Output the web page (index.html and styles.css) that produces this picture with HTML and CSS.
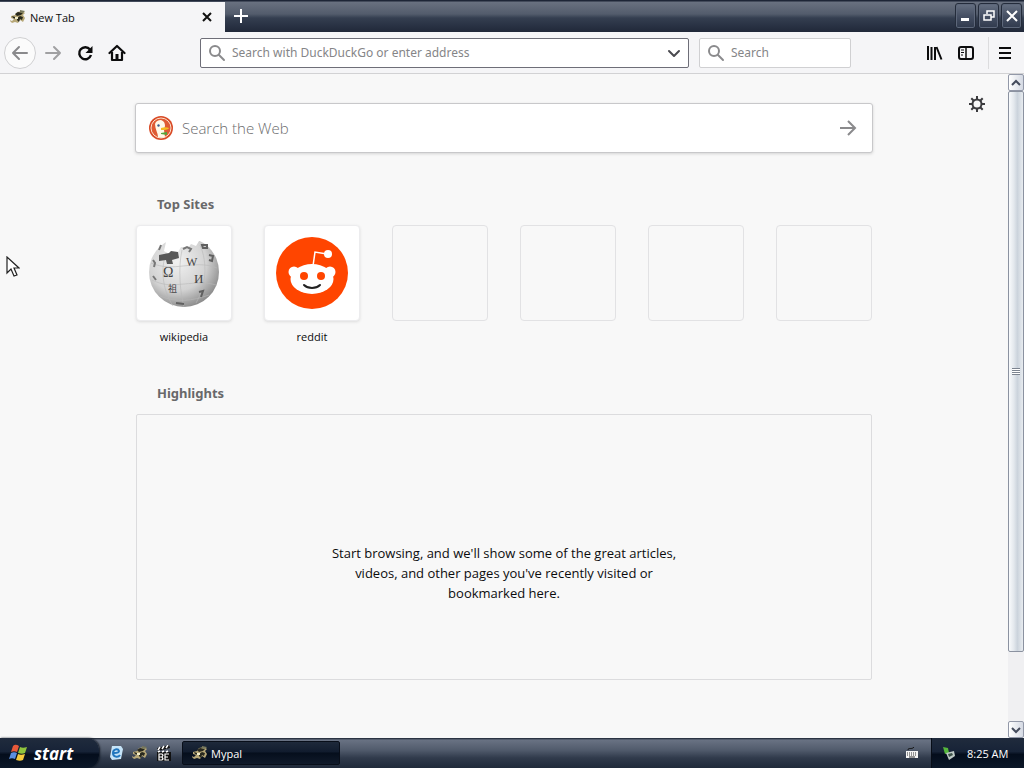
FILE: index.html
```html
<!DOCTYPE html>
<html lang="en">
<head>
    <meta charset="UTF-8">
    <meta name="viewport" content="width=device-width, initial-scale=1.0">
    <title>New Tab</title>
    <link rel="stylesheet" href="styles.css">
</head>
<body>
    <svg class="defs" width="0" height="0" aria-hidden="true">
        <symbol id="icon-mypal" viewBox="0 0 16 16">
            <path d="M1 7l4-1 2-3 5-1 3 2-2 2 2 3-2 4-3-2-2 3-3-1-3 1-3-3 3 1 2-2-3-1z" fill="#b7a878"/>
            <path d="M5 5l3-2 5 1-2 2-4 1zM2 7l3 1 1 2-3-1zM7 9l3-2 3 1-1 3-2-1-1 3-2-2z" fill="#28291f"/>
            <path d="M10 1l5 1-2 2-3-1z" fill="#77785d"/>
            <path d="M5 8h3v2H5z" fill="#f3edcc"/>
        </symbol>
        <symbol id="icon-search" viewBox="0 0 18 18">
            <circle cx="7" cy="7" r="5" fill="none" stroke="currentColor" stroke-width="2"/>
            <path d="M11 11l5 5" stroke="currentColor" stroke-width="2" stroke-linecap="round"/>
        </symbol>
    </svg>

    <div class="window">
        <header class="titlebar">
            <div class="tab">
                <svg class="icon" viewBox="0 0 16 16"><use href="#icon-mypal"/></svg>
                <span class="tab-title">New Tab</span>
                <button class="tab-close" aria-label="Close tab">
                    <svg width="10" height="10" viewBox="0 0 10 10"><path d="M1 1l8 8M9 1L1 9" stroke="#111" stroke-width="2"/></svg>
                </button>
            </div>
            <button class="new-tab" aria-label="New tab">
                <svg width="14" height="14" viewBox="0 0 14 14"><path d="M7 0v14M0 7h14" stroke="#fff" stroke-width="2"/></svg>
            </button>
            <div class="window-controls">
                <button aria-label="Minimize"><svg width="14" height="14" viewBox="0 0 14 14"><path d="M2 9h8v3H2z" fill="#fff"/></svg></button>
                <button aria-label="Restore"><svg width="14" height="14" viewBox="0 0 14 14"><path d="M5 5V2h7v6H9M2 6h7v5H2zM5 2h7M2 6h7" fill="none" stroke="#fff" stroke-width="1.5"/></svg></button>
                <button aria-label="Close"><svg width="14" height="14" viewBox="0 0 14 14"><path d="M2 2l10 10M12 2L2 12" stroke="#fff" stroke-width="2"/></svg></button>
            </div>
        </header>

        <nav class="toolbar">
            <button class="tool back" aria-label="Back">
                <svg viewBox="0 0 18 18"><path d="M16 9H2M8 3L2 9l6 6" fill="none" stroke="#8a8a8c" stroke-width="2" stroke-linecap="round" stroke-linejoin="round"/></svg>
            </button>
            <button class="tool" aria-label="Forward">
                <svg viewBox="0 0 18 18"><path d="M2 9h14M10 3l6 6-6 6" fill="none" stroke="#a0a0a2" stroke-width="2" stroke-linecap="round" stroke-linejoin="round"/></svg>
            </button>
            <button class="tool" aria-label="Reload">
                <svg viewBox="0 0 18 18"><path d="M14 5.5a6 6 0 1 0 1 5.5" fill="none" stroke="#0c0c0d" stroke-width="2.4"/><path d="M16.5 2v7h-7z" fill="#0c0c0d"/></svg>
            </button>
            <button class="tool" aria-label="Home">
                <svg viewBox="0 0 18 18"><path d="M1.5 9L9 2l7.5 7" fill="none" stroke="#0c0c0d" stroke-width="2.2" stroke-linecap="round" stroke-linejoin="round"/><path d="M4 8v8h10V8" fill="none" stroke="#0c0c0d" stroke-width="2.2" stroke-linejoin="round"/><path d="M7.5 10h3v6h-3z" fill="#0c0c0d"/></svg>
            </button>
            <div class="spacer"></div>
            <div class="field urlbar">
                <svg class="glass"><use href="#icon-search"/></svg>
                <input type="text" aria-label="Address" placeholder="Search with DuckDuckGo or enter address">
                <button class="drop" aria-label="Show history">
                    <svg width="14" height="14" viewBox="0 0 14 14"><path d="M2 5l5 5 5-5" fill="none" stroke="#4a4a4f" stroke-width="2" stroke-linecap="round" stroke-linejoin="round"/></svg>
                </button>
            </div>
            <div class="field searchbar">
                <svg class="glass"><use href="#icon-search"/></svg>
                <input type="text" aria-label="Search" placeholder="Search">
            </div>
            <div class="spacer"></div>
            <button class="tool" aria-label="Library">
                <svg viewBox="0 0 18 18"><path d="M3 2v14M6.500 3v13M10 3v13M11.5 3l5 12.5" fill="none" stroke="#0c0c0d" stroke-width="2"/></svg>
            </button>
            <button class="tool" aria-label="Sidebars">
                <svg viewBox="0 0 18 18"><rect x="2" y="3" width="14" height="12" rx="2" fill="none" stroke="#0c0c0d" stroke-width="2"/><path d="M9 3v12" stroke="#0c0c0d" stroke-width="1.5"/><path d="M4 6h3M4 8.5h3M4 11h2" stroke="#0c0c0d"/></svg>
            </button>
            <button class="tool menu" aria-label="Menu">
                <svg viewBox="0 0 18 18"><path d="M3 4h12M3 9h12M3 14h12" stroke="#0c0c0d" stroke-width="2"/></svg>
            </button>
        </nav>

        <div class="viewport">
            <main class="page">
                <div class="content">
                    <form class="web-search">
                        <svg class="duck" viewBox="0 0 24 24">
                            <circle cx="12" cy="12" r="12" fill="#d94b27"/>
                            <circle cx="12" cy="12" r="10" fill="#df5b34" stroke="#fbe3cf"/>
                            <path d="M9 21c0-4-3-8-3-13 1-3 3-4 6-4 3 1 4 3 4 6l-1 4 1 7c-2 1-5 1-7 0z" fill="#fff8e8"/>
                            <path d="M12 12c3-1 6-1 8 0-1 2-5 2-8 2z" fill="#f6bb22"/>
                            <path d="M12 17l6-1v3l-6-1z" fill="#54a63c"/>
                            <circle cx="9.5" cy="9.5" r="1.2" fill="#375b8c"/>
                        </svg>
                        <input type="text" aria-label="Search the Web" placeholder="Search the Web">
                        <button type="submit" aria-label="Search">
                            <svg width="18" height="18" viewBox="0 0 18 18"><path d="M1 9h15M9 2l7 7-7 7" fill="none" stroke="#8a8a8c" stroke-width="2"/></svg>
                        </button>
                    </form>

                    <section class="section">
                        <h2>Top Sites</h2>
                        <ul class="sites">
                            <li>
                                <a class="site" href="#wikipedia">
                                    <span class="tile filled">
                                        <svg width="72" height="72" viewBox="0 0 72 72">
                                            <defs>
                                                <radialGradient id="globe" cx="0.4" cy="0.35" r="0.7">
                                                    <stop offset="0" stop-color="#f1f1f1"/>
                                                    <stop offset="0.6" stop-color="#d2d2d2"/>
                                                    <stop offset="1" stop-color="#858585"/>
                                                </radialGradient>
                                            </defs>
                                            <circle cx="36" cy="35" r="35" fill="url(#globe)"/>
                                            <g fill="none" stroke="#b8b8b8" stroke-width="0.6">
                                                <path d="M3 26c12 5 22 4 32 3s22-3 34 2M4 43c12 6 20 5 32 4s22-2 32 1M12 59c16 7 32 5 49-1"/>
                                                <path d="M19 14c-7 16-5 38 6 55M34 13c-4 18-2 42 2 57M52 8c8 18 6 41-4 58"/>
                                            </g>
                                            <!-- missing pieces at the top -->
                                            <path d="M12 0v7l6-2-2 9 6 4 8-3 3-5 7 1 3-4 5 2 3-5 7-1V0z" fill="#fff"/>
                                            <path d="M11 18l10-2 2-2 7 1 1 6-7 2 1 4h-6l-1-4-7 1z" fill="#585858"/>
                                            <path d="M35 12l4-2 4 2-2 3M5 23l2 3-1 4M5 39l3 4M13 8l-2 5" fill="none" stroke="#777" stroke-width="2"/>
                                            <g fill="#444" font-family="Liberation Serif, Noto Sans CJK JP, serif" font-size="14">
                                                <text x="15" y="40">Ω</text>
                                                <text x="38" y="29" font-size="12">W</text>
                                                <text x="46" y="46" font-size="13">И</text>
                                                <text x="20" y="55" font-size="9">祖</text>
                                            </g>
                                            <path d="M54 8h5v3h-4zM61 18l4 1-1 5-3-1M51 55l4-1-2 6M28 66l8 1" fill="none" stroke="#606060" stroke-width="2"/>
                                        </svg>
                                    </span>
                                    <span class="site-title">wikipedia</span>
                                </a>
                            </li>
                            <li>
                                <a class="site" href="#reddit">
                                    <span class="tile filled">
                                        <svg width="72" height="72" viewBox="0 0 72 72">
                                            <circle cx="36" cy="36" r="36" fill="#ff4500"/>
                                            <path d="M37 29l2-14 12 2" fill="none" stroke="#fff" stroke-width="1.5"/>
                                            <circle cx="52" cy="17" r="4" fill="#fff"/>
                                            <circle cx="18" cy="35" r="5.5" fill="#fff"/>
                                            <circle cx="54" cy="35" r="5.5" fill="#fff"/>
                                            <ellipse cx="36" cy="42" rx="21.5" ry="15" fill="#fff"/>
                                            <circle cx="28" cy="39" r="4" fill="#ff4500"/>
                                            <circle cx="45" cy="39" r="4" fill="#ff4500"/>
                                            <path d="M28 48c4 4 12 4 16 0" fill="none" stroke="#222" stroke-width="2" stroke-linecap="round"/>
                                        </svg>
                                    </span>
                                    <span class="site-title">reddit</span>
                                </a>
                            </li>
                            <li><div class="tile"></div></li>
                            <li><div class="tile"></div></li>
                            <li><div class="tile"></div></li>
                            <li><div class="tile"></div></li>
                        </ul>
                    </section>

                    <section class="section">
                        <h2>Highlights</h2>
                        <div class="highlights">
                            <p>Start browsing, and we'll show some of the great articles, videos, and other pages you've recently visited or bookmarked here.</p>
                        </div>
                    </section>
                </div>
                <button class="settings" aria-label="Customize page">
                    <svg width="16" height="16" viewBox="0 0 16 16"><circle cx="8" cy="8" r="4.5" fill="none" stroke="#3b3b3e" stroke-width="2"/><path d="M8 0v4M8 12v4M0 8h4M12 8h4M2.3 2.3L5 5M11 11l2.7 2.7M13.7 2.3L11 5M5 11l-2.7 2.7" stroke="#3b3b3e" stroke-width="2"/></svg>
                </button>
            </main>

            <div class="scrollbar">
                <button class="scroll-button" aria-label="Scroll up"><svg width="10" height="10" viewBox="0 0 10 10"><path d="M1 7l4-4 4 4" fill="none" stroke="#444b5c" stroke-width="2"/></svg></button>
                <div class="scroll-track">
                    <div class="thumb"><span class="grip"></span></div>
                </div>
                <button class="scroll-button" aria-label="Scroll down"><svg width="10" height="10" viewBox="0 0 10 10"><path d="M1 3l4 4 4-4" fill="none" stroke="#444b5c" stroke-width="2"/></svg></button>
            </div>
        </div>
    </div>

    <footer class="taskbar">
        <button class="start">
            <svg width="20" height="20" viewBox="0 0 20 20">
                <path d="M4 3c2-2 4-1 6 0L8 9C6 8 4 8 2 9z" fill="#e8593a"/>
                <path d="M11 4c2 1 4 1 7 0l-2 6c-2 1-4 1-7 0z" fill="#8fc43d"/>
                <path d="M2 10c2-1 4-1 6 0l-2 6c-2-1-4-1-6 0z" fill="#5c8fe0"/>
                <path d="M9 11c2 1 4 1 7 0l-2 6c-2 1-4 1-7 0z" fill="#f5ca3c"/>
            </svg>
            <span>start</span>
        </button>
        <div class="quick-launch">
            <button aria-label="Web browser">
                <svg viewBox="0 0 16 16"><path d="M4 1h9l2 3-2 10-9 1-2-3z" fill="#c6e4f8"/><path d="M12 10c-2 3-7 2-7-2s5-5 6-2c0 2-3 2-5 2" fill="none" stroke="#2176be" stroke-width="2"/></svg>
            </button>
            <button aria-label="Mypal"><svg viewBox="0 0 16 16"><use href="#icon-mypal"/></svg></button>
            <button aria-label="Media player">
                <svg viewBox="0 0 16 16"><path d="M1 3l12-3 1 3L2 6zM1 7h14v9H1z" fill="#111"/><path d="M2 5l2-3M6 4l2-3M10 3l2-3M2 7l2-1M6 7l2-1M10 7l2-1" stroke="#fff" stroke-width="1.5"/><path d="M3 9v6h3l1-1-1-2 1-2-1-1zM3 12h3M13 9H9v6h4M9 12h3" fill="none" stroke="#fff" stroke-width="1.2"/></svg>
            </button>
        </div>
        <button class="task">
            <svg class="icon" viewBox="0 0 16 16"><use href="#icon-mypal"/></svg>
            <span>Mypal</span>
        </button>
        <button class="keyboard" aria-label="Keyboard">
            <svg width="14" height="14" viewBox="0 0 14 14"><path d="M3 4c0-3 4 0 6-3" fill="none" stroke="#111"/><path d="M1 5h12v7H1z" fill="#f4f4f4"/><path d="M2 7h10M2 9h10" stroke="#333" stroke-dasharray="1 1"/><path d="M4 11h6" stroke="#333"/></svg>
        </button>
        <div class="tray">
            <svg width="16" height="16" viewBox="0 0 16 16"><path d="M2 2l5 1 1 5-4 1z" fill="#55b73c"/><path d="M5 8l8-2 1 5-6 4z" fill="#bec9c5"/><path d="M7 9l4-1 1 2-4 2z" fill="#3c5148"/></svg>
            <time>8:25 AM</time>
        </div>
    </footer>

    <svg class="cursor" width="14" height="22" viewBox="0 0 14 22" aria-hidden="true">
        <path d="M1 1v16l4-4 3 7 3-1-3-7h5z" fill="#fff" stroke="#222" stroke-width="1.2"/>
    </svg>
</body>
</html>
```

FILE: styles.css
```css
* {
    box-sizing: border-box;
}
body {
    margin: 0;
    height: 100vh;
    display: flex;
    flex-direction: column;
    overflow: hidden;
    font-family: "Open Sans", "Noto Sans", sans-serif;
    font-size: 12px;
    color: #0c0c0d;
    background: #f8f8f8;
}
button, input {
    font: inherit;
    color: inherit;
    border: 0;
    padding: 0;
    background: none;
}
button {
    display: flex;
    align-items: center;
    justify-content: center;
    flex-shrink: 0;
}
input {
    flex: 1;
    min-width: 0;
    outline: none;
}
svg {
    display: block;
    flex-shrink: 0;
}
.defs {
    position: absolute;
}
.icon {
    width: 16px;
    height: 16px;
}
.window {
    flex: 1;
    min-height: 0;
    display: flex;
    flex-direction: column;
}

/* title bar */
.titlebar {
    height: 32px;
    display: flex;
    background: linear-gradient(#1d2536 0, #1d2536 1px, #697180 2px, #535c6c 14px, #343e50 18px, #202839 32px);
}
.tab {
    width: 225px;
    margin-top: 2px;
    padding: 0 8px 0 10px;
    display: flex;
    align-items: center;
    gap: 4px;
    background: #f5f5f7;
    font-size: 11px;
}
.tab-title {
    flex: 1;
}
.tab-close {
    width: 20px;
    height: 20px;
}
.new-tab {
    width: 32px;
}
.window-controls {
    margin-left: auto;
    padding: 3px 2px 3px 0;
    display: flex;
    gap: 2px;
}
.window-controls button {
    width: 21px;
    border: 1px solid #242c3b;
    border-radius: 3px;
    background: linear-gradient(#667082, #465064 50%, #303a4d);
    box-shadow: inset 0 0 0 1px #5d677a;
}

/* navigation toolbar */
.toolbar {
    height: 42px;
    padding: 0 4px;
    display: flex;
    align-items: center;
    background: #f5f5f7;
    border-bottom: 1px solid #d2d2d4;
}
.tool {
    width: 32px;
    height: 32px;
}
.tool svg {
    width: 18px;
    height: 18px;
}
.back {
    margin-right: 1px;
    border: 1px solid #d0d0d2;
    border-radius: 50%;
    background: #fbfbfb;
}
.menu {
    margin-left: 6px;
    border-left: 1px solid #dcdcde;
}
.spacer {
    flex: 0 1 67px;
}
.field {
    height: 30px;
    padding: 0 7px;
    display: flex;
    align-items: center;
    gap: 6px;
    border: 1px solid #d0d0d2;
    border-radius: 2px;
    background: #fff;
    font-family: "Noto Sans", "Open Sans", sans-serif;
}
.urlbar {
    flex: 1;
    border-color: #6e6e78;
}
.searchbar {
    width: 152px;
    margin-left: 10px;
}
.glass {
    width: 18px;
    height: 18px;
    color: #8a8a8c;
}
input::placeholder {
    color: #858587;
    opacity: 1;
}

/* new tab page */
.viewport {
    flex: 1;
    min-height: 0;
    display: flex;
}
.page {
    flex: 1;
    display: grid;
    grid-template-columns: 1fr minmax(0, 738px) 1fr;
    align-items: start;
    background: #f8f8f8;
    overflow: hidden;
}
.content {
    grid-column: 2;
    padding-top: 29px;
}
.settings {
    justify-self: end;
    width: 32px;
    height: 32px;
    margin: 14px 15px 0 0;
}
.web-search {
    height: 50px;
    padding: 0 15px 0 13px;
    display: flex;
    align-items: center;
    gap: 9px;
    border: 1px solid #c8c8ca;
    border-radius: 3px;
    background: #fff;
    box-shadow: 0 1px 3px #d4d4d4;
    font-size: 15px;
    font-weight: 300;
}
.web-search input::placeholder {
    color: #6c6c6e;
}
.duck {
    width: 24px;
    height: 24px;
}
.section {
    padding: 0 1px;
}
.section h2 {
    margin: 0;
    padding: 0 21px;
    font-family: "Noto Sans", "Open Sans", sans-serif;
    font-size: 13px;
    line-height: 20px;
    color: #68686a;
}
.web-search + .section {
    padding-top: 41px;
}
.sites {
    margin: 0;
    padding: 11px 0 36px;
    display: grid;
    grid-template-columns: repeat(6, 96px);
    justify-content: space-between;
    list-style: none;
}
.site {
    color: inherit;
    text-decoration: none;
    font-size: 11px;
    text-align: center;
}
.tile {
    height: 96px;
    display: flex;
    align-items: center;
    justify-content: center;
    border: 1px solid #e2e2e4;
    border-radius: 4px;
}
.filled {
    border-color: #ececee;
    background: #fff;
    box-shadow: 0 1px 3px #dcdcdc;
}
.site-title {
    display: block;
    padding-top: 6px;
    line-height: 20px;
}
.highlights {
    min-height: 266px;
    margin-top: 11px;
    padding-top: 51px;
    display: flex;
    align-items: center;
    justify-content: center;
    border: 1px solid #dcdcde;
    border-radius: 2px;
}
.highlights p {
    max-width: 350px;
    margin: 0;
    font-size: 13px;
    line-height: 20px;
    text-align: center;
}

/* scrollbar */
.scrollbar {
    width: 16px;
    display: flex;
    flex-direction: column;
    background: #f0f0f2;
}
.scroll-button {
    height: 17px;
    border: 1px solid #9298a8;
    border-radius: 2px;
    background: linear-gradient(90deg, #fff, #d4d9e3);
}
.scroll-track {
    flex: 1;
}
.thumb {
    height: 89%;
    display: flex;
    align-items: center;
    justify-content: center;
    border: 1px solid #8b92a0;
    border-radius: 2px;
    background: linear-gradient(90deg, #f8fafc, #e3e8ed 35%, #cbd3dc 60%, #e8ecf0);
}
.grip {
    width: 8px;
    height: 7px;
    background: repeating-linear-gradient(#7c8490 0, #7c8490 1px, #fff 1px, #fff 2px);
}

/* taskbar */
.taskbar {
    height: 30px;
    display: flex;
    align-items: stretch;
    color: #fff;
    font-size: 11px;
    background: linear-gradient(#161e2d 0, #697283 2px, #515b6c 12px, #303a4b 20px, #202a3a 30px);
}
.start {
    width: 99px;
    padding: 0 16px 0 9px;
    gap: 5px;
    justify-content: flex-start;
    border-radius: 0 12px 12px 0;
    background: linear-gradient(#202b3d, #172337 45%, #040d1c 55%, #0b1728);
    box-shadow: 1px 0 2px #101722;
    font-size: 17px;
    font-weight: bold;
    font-style: italic;
}
.quick-launch {
    padding: 0 10px 0 9px;
    display: flex;
    align-items: center;
    gap: 8px;
}
.quick-launch svg {
    width: 16px;
    height: 16px;
}
.task {
    width: 158px;
    margin: 3px 0;
    padding-left: 9px;
    gap: 3px;
    justify-content: flex-start;
    border: 1px solid #080e19;
    border-radius: 2px;
    background: linear-gradient(#1e293a, #111c2e 45%, #050e1c 50%, #101a2a);
}
.keyboard {
    width: 14px;
    margin-left: auto;
    margin-right: 12px;
}
.tray {
    width: 93px;
    padding-left: 9px;
    display: flex;
    align-items: center;
    gap: 10px;
    border-left: 1px solid #070d17;
    background: linear-gradient(#202b3d, #172337 45%, #040d1c 55%, #0b1728);
}
.tray time {
    white-space: nowrap;
}

/* pointer over the page */
.cursor {
    position: absolute;
    left: 6px;
    top: 256px;
}
```
